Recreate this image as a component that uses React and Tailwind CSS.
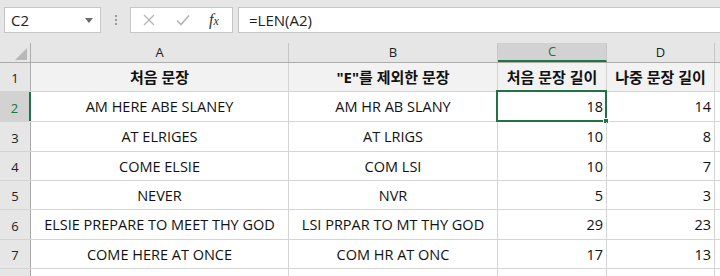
const font = { fontFamily: '"Open Sans", "Noto Sans CJK KR", sans-serif' }

const rows = [
  { h: 'h-[29px]', cells: ['처음 문장', '"E"를 제외한 문장', '처음 문장 길이', '나중 문장 길이'], head: true },
  { h: 'h-[30px]', cells: ['AM HERE ABE SLANEY', 'AM HR AB SLANY', '18', '14'] },
  { h: 'h-[30px]', cells: ['AT ELRIGES', 'AT LRIGS', '10', '8'] },
  { h: 'h-[29px]', cells: ['COME ELSIE', 'COM LSI', '10', '7'] },
  { h: 'h-[29px]', cells: ['NEVER', 'NVR', '5', '3'] },
  { h: 'h-[30px]', cells: ['ELSIE PREPARE TO MEET THY GOD', 'LSI PRPAR TO MT THY GOD', '29', '23'] },
  { h: 'h-[29px]', cells: ['COME HERE AT ONCE', 'COM HR AT ONC', '17', '13'] },
]

const widths = ['w-[258px]', 'w-[209px]', 'w-[109px]', 'w-[108px]']

function Toolbar() {
  return (
    <div className="flex items-start gap-0 bg-[#e6e6e6] pt-[7px] pb-[10px] pl-[4px] h-[43px]">
      <div className="flex items-center justify-between w-[97px] h-[26px] bg-white border border-[#c6c6c6] pl-[6px] pr-[7px]">
        <span className="text-[15px] text-[#222]">C2</span>
        <svg width="8" height="5" viewBox="0 0 8 5"><path d="M0 0h8L4 5z" fill="#6b6b6b" /></svg>
      </div>
      <div className="w-[29px] h-[26px] flex flex-col items-center justify-center gap-[2px]">
        <span className="w-[2px] h-[2px] bg-[#9a9a9a]" />
        <span className="w-[2px] h-[2px] bg-[#9a9a9a]" />
        <span className="w-[2px] h-[2px] bg-[#9a9a9a]" />
      </div>
      <div className="flex items-center w-[103px] h-[26px] bg-white border border-[#c6c6c6]">
        <svg className="ml-[12px]" width="12" height="12" viewBox="0 0 12 12"><path d="M1 1l10 10M11 1L1 11" stroke="#b4b4b4" strokeWidth="1.3" /></svg>
        <svg className="ml-[21px]" width="14" height="12" viewBox="0 0 14 12"><path d="M1 6.5l4 4L13 1.5" stroke="#b4b4b4" strokeWidth="1.6" fill="none" /></svg>
        <span className="ml-[19px] text-[16px] italic text-[#333] leading-none" style={{ fontFamily: '"Liberation Serif", serif' }}>f<span className="text-[12px]">x</span></span>
      </div>
      <div className="flex items-center flex-1 h-[26px] ml-[5px] bg-white border border-[#c6c6c6] border-r-0 pl-[10px]">
        <span className="text-[15px] text-[#222]">=LEN(A2)</span>
      </div>
    </div>
  )
}

function HeaderRow() {
  const cols = ['A', 'B', 'C', 'D']
  return (
    <div className="flex h-[20px] bg-[#e6e6e6] border-b border-[#ababab]">
      <div className="w-[31px] border-r border-[#ababab] relative">
        <svg className="absolute right-[3px] bottom-[2px]" width="12" height="12" viewBox="0 0 12 12"><path d="M12 0v12H0z" fill="#b8b8b8" /></svg>
      </div>
      {cols.map((c, i) => (
        <div
          key={c}
          className={`${widths[i]} flex items-center justify-center border-r border-[#c6c6c6] text-[13px] ${c === 'C' ? 'bg-[#d2d2d2] text-[#217346] border-b-2 border-b-[#217346]' : 'text-[#222]'}`}
        >
          {c}
        </div>
      ))}
      <div className="flex-1" />
    </div>
  )
}

export default function App() {
  return (
    <div className="w-[720px] h-[276px] overflow-hidden bg-white" style={font}>
      <Toolbar />
      <HeaderRow />
      {rows.map((r, ri) => (
        <div key={ri} className={`flex ${r.h} border-b border-[#d4d4d4] ${r.head ? 'bg-[#f2f2f2]' : 'bg-white'}`}>
          <div className={`w-[31px] flex items-end justify-center pb-[3px] text-[13px] border-r ${ri === 1 ? 'bg-[#d2d2d2] text-[#217346] border-r-2 border-r-[#217346]' : 'bg-[#e6e6e6] text-[#222] border-r-[#ababab]'}`}>
            {ri + 1}
          </div>
          {r.cells.map((t, ci) => (
            <div
              key={ci}
              className={`${widths[ci]} relative flex items-center border-r border-[#d4d4d4] pt-[1px] text-[#111] whitespace-nowrap ${r.head ? 'font-bold text-[15px] justify-center' : 'text-[14.5px]'} ${!r.head && ci > 1 ? 'justify-end pr-[3px]' : 'justify-center'}`}
            >
              {t}
              {ri === 1 && ci === 2 && (
                <>
                  <div className="absolute -left-[2px] -top-[2px] -right-[1px] -bottom-[1px] border-2 border-[#217346]" />
                  <div className="absolute -right-[3px] -bottom-[3px] w-[6px] h-[6px] bg-[#217346] border border-white" />
                </>
              )}
            </div>
          ))}
          <div className="flex-1" />
        </div>
      ))}
      <div className="flex h-[10px]">
        <div className="w-[31px] bg-[#e6e6e6] border-r border-[#ababab]" />
        {widths.map((w, i) => <div key={i} className={`${w} border-r border-[#d4d4d4]`} />)}
      </div>
    </div>
  )
}
